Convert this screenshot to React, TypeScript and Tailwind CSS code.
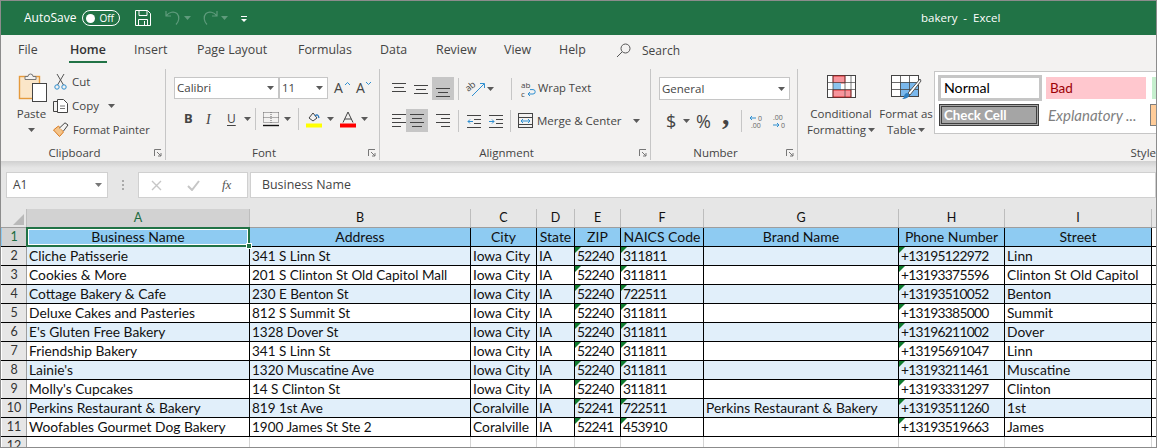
import React from "react";

const UI = "font-['Open_Sans',sans-serif]";
const cols = ["A", "B", "C", "D", "E", "F", "G", "H", "I"];
type R = [string, string, string, string, string, string, string, string, string];
const rows: R[] = [
  ["Cliche Patisserie", "341 S Linn St", "Iowa City", "IA", "52240", "311811", "", "+13195122972", "Linn"],
  ["Cookies & More", "201 S Clinton St Old Capitol Mall", "Iowa City", "IA", "52240", "311811", "", "+13193375596", "Clinton St Old Capitol"],
  ["Cottage Bakery & Cafe", "230 E Benton St", "Iowa City", "IA", "52240", "722511", "", "+13193510052", "Benton"],
  ["Deluxe Cakes and Pasteries", "812 S Summit St", "Iowa City", "IA", "52240", "311811", "", "+13193385000", "Summit"],
  ["E's Gluten Free Bakery", "1328 Dover St", "Iowa City", "IA", "52240", "311811", "", "+13196211002", "Dover"],
  ["Friendship Bakery", "341 S Linn St", "Iowa City", "IA", "52240", "311811", "", "+13195691047", "Linn"],
  ["Lainie's", "1320 Muscatine Ave", "Iowa City", "IA", "52240", "311811", "", "+13193211461", "Muscatine"],
  ["Molly's Cupcakes", "14 S Clinton St", "Iowa City", "IA", "52240", "311811", "", "+13193331297", "Clinton"],
  ["Perkins Restaurant & Bakery", "819 1st Ave", "Coralville", "IA", "52241", "722511", "Perkins Restaurant & Bakery", "+13193511260", "1st"],
  ["Woofables Gourmet Dog Bakery", "1900 James St Ste 2", "Coralville", "IA", "52241", "453910", "", "+13193519663", "James"],
];
const headers = ["Business Name", "Address", "City", "State", "ZIP", "NAICS Code", "Brand Name", "Phone Number", "Street"];
const gridCols = "grid grid-cols-[25px_223px_221px_66px_38px_46px_83px_195px_106px_147px_1fr]";

const Caret = ({ c = "#5a5a5a" }: { c?: string }) => (
  <svg width="7" height="4" viewBox="0 0 7 4" className="shrink-0"><path d="M0 0h7L3.5 4z" fill={c} /></svg>
);
const Sep = ({ h = "h-[22px]" }: { h?: string }) => <div className={`w-px ${h} bg-[#c6c6c6] shrink-0`} />;
const Launcher = () => (
  <svg width="8" height="8" viewBox="0 0 8 8" className="shrink-0"><path d="M.5 7V.5H7M3 3l4 4M7 4v3H4" fill="none" stroke="#777" strokeWidth="1" /></svg>
);

const Lines = ({ w, ys, xs }: { w: number; ys: number[]; xs: [number, number][] }) => (
  <svg width={w} height="16" viewBox={`0 0 ${w} 16`} className="block">
    {ys.map((y, i) => (
      <path key={i} d={`M${xs[i][0]} ${y + 0.5}H${xs[i][1]}`} stroke="#444" strokeWidth="1" />
    ))}
  </svg>
);
const Group = ({ w, label, launcher, labelClass = "justify-center pr-[17px]", children }: { w: string; label: string; launcher?: boolean; labelClass?: string; children: React.ReactNode }) => (
  <div className={`${w} h-full shrink-0 flex flex-col relative`}>
    <div className="flex-1 min-h-0">{children}</div>
    <div className={`h-[16px] flex items-start ${labelClass} text-[11.5px] leading-[16px] text-[#444]`}>{label}</div>
    {launcher && <div className="absolute right-[3px] bottom-[4px] flex"><Launcher /></div>}
  </div>
);

function ClipboardGroup() {
  return (
    <Group w="w-[164px]" label="Clipboard" launcher>
      <div className="flex pl-[9px] pt-[7px]">
        <div className="w-[43px] flex flex-col items-center">
          <svg width="32" height="32" viewBox="0 0 32 32">
            <rect x="3.5" y="5.5" width="20" height="22" fill="#fbe6c8" stroke="#e59a3c" strokeWidth="1.4" />
            <path d="M9 5.5h3a2.500 2.500 0 0 1 5 0h3v3H9z" fill="#f3f2f1" stroke="#777" strokeWidth="1" />
            <rect x="16.5" y="12.5" width="14" height="18" fill="#fff" stroke="#444" strokeWidth="1" />
          </svg>
          <div className="text-[11.5px] leading-[16px] text-[#444] mt-[3px]">Paste</div>
          <div className="mt-[6px]"><Caret /></div>
        </div>
        <div className="flex flex-col text-[11px] leading-[16px] text-[#444] -mt-[1px]">
          <div className="h-[24px] flex items-center gap-[5px]">
            <svg width="13" height="16" viewBox="0 0 13 16" className="ml-[1px]"><path d="M3 0l6.5 11M10 0L3.500 11" stroke="#555" fill="none" /><circle cx="3" cy="13" r="2.2" fill="none" stroke="#2f8fd0" /><circle cx="10" cy="13" r="2.2" fill="none" stroke="#2f8fd0" /></svg>
            <span className="text-[11.5px]">Cut</span>
          </div>
          <div className="h-[24px] flex items-center gap-[3px]">
            <svg width="16" height="16" viewBox="0 0 16 16"><path d="M6 3.5H.5v10H6" fill="none" stroke="#444" /><path d="M4.5 1.5h6l4 4v9h-10z" fill="#fff" stroke="#444" /><path d="M7 8h5M7 10.5h5" stroke="#777" /></svg>
            <span className="text-[11.5px]">Copy</span><span className="ml-[6px]"><Caret /></span>
          </div>
          <div className="h-[24px] flex items-center gap-[4px]">
            <svg width="16" height="16" viewBox="0 0 16 16"><path d="M0.5 8l5-4 5 6-4 4.500z" fill="#f4c48a" stroke="#d9791f" /><path d="M6.5 6L12 .8l3 2.200-4.500 6" fill="#f3f2f1" stroke="#444" /></svg>
            <span className="whitespace-nowrap">Format Painter</span>
          </div>
        </div>
      </div>
    </Group>
  );
}

function FontGroup() {
  return (
    <Group w="w-[213px]" label="Font" launcher>
      <div className="pl-[8px] pt-[13px] flex flex-col">
        <div className="flex items-center h-[22px]">
          <div className="w-[105px] h-[22px] bg-white border border-[#c6c6c6] flex items-center justify-between pl-[2px] pr-[4px] text-[11.5px] text-[#444]">Calibri <Caret /></div>
          <div className="w-[49px] h-[22px] bg-white border border-[#c6c6c6] flex items-center justify-between pl-[2px] pr-[4px] text-[11.5px] text-[#444]">11 <Caret /></div>
          <div className="ml-[6px] w-[22px] text-[14px] leading-[22px] text-[#444] relative">A<svg width="5" height="3" viewBox="0 0 5 3" className="absolute left-[11px] top-[5px]"><path d="M0 3l2.500-2.500L5 3" fill="none" stroke="#2f8fd0" /></svg></div>
          <div className="w-[22px] text-[14px] leading-[22px] text-[#444] relative">A<svg width="5" height="3" viewBox="0 0 5 3" className="absolute left-[10px] top-[5px]"><path d="M0 0l2.500 2.500L5 0" fill="none" stroke="#2f8fd0" /></svg></div>
        </div>
        <div className="flex items-center h-[22px] mt-[9px] text-[#444]">
          <span className="ml-[10px] w-[22px] text-[13px] font-bold font-['Noto_Sans',sans-serif]">B</span>
          <span className="w-[21px] text-[14px] italic font-['Liberation_Serif',serif]">I</span>
          <span className="w-[17px] text-[12px] underline underline-offset-2">U</span>
          <Caret />
          <span className="w-[4px]" />
          <Sep />
          <svg width="16" height="16" viewBox="0 0 16 16" className="ml-[7px]"><path d="M.5 1.500h15M.5 1.500v10M15.500 1.500v10M8 1v11M.5 6.500h15M.5 11.500h15" stroke="#666" strokeDasharray="1 1" fill="none" /><path d="M0 14.500h16" stroke="#111" strokeWidth="1.4" /></svg>
          <span className="ml-[5px]"><Caret /></span>
          <span className="ml-[7px]"><Sep /></span>
          <svg width="16" height="17" viewBox="0 0 16 17" className="ml-[7px]"><path d="M3 7l4-5 4 5-4 3z" fill="none" stroke="#444" /><path d="M9 5q3-3 4 2" fill="none" stroke="#1e6fb8" strokeWidth="1.3" /><rect x="0" y="12.500" width="16" height="4" fill="#ffff00" /></svg>
          <span className="ml-[5px]"><Caret /></span>
          <svg width="16" height="17" viewBox="0 0 16 17" className="ml-[6px]"><path d="M3 11.500L8 1l5 10.500M4.800 8h6.400" fill="none" stroke="#444" /><rect x="0" y="12.500" width="16" height="4" fill="#ff0000" /></svg>
          <span className="ml-[5px]"><Caret /></span>
        </div>
      </div>
    </Group>
  );
}

function AlignIcon({ ys, xs }: { ys: number[]; xs: [number, number][] }) {
  return <Lines w={14} ys={ys} xs={xs} />;
}

function AlignmentGroup() {
  const sel = "bg-[#c6c6c6]";
  const cell = "w-[22px] h-[23px] flex items-center justify-center";
  return (
    <Group w="w-[270px]" label="Alignment" launcher>
      <div className="pl-[8px] pt-[13px] flex flex-col text-[#444] text-[11.5px]">
        <div className="flex items-center h-[23px]">
          <div className={cell}><AlignIcon ys={[2, 6, 10]} xs={[[0, 14], [2, 12], [0, 14]]} /></div>
          <div className={cell}><AlignIcon ys={[4, 8, 12]} xs={[[0, 14], [2, 12], [0, 14]]} /></div>
          <div className={`${cell} ${sel}`}><AlignIcon ys={[7, 11, 15]} xs={[[0, 14], [2, 12], [0, 14]]} /></div>
          <span className="ml-[4px]"><Sep /></span>
          <div className="ml-[7px] w-[24px] h-[20px] flex items-center">
            <svg width="20" height="16" viewBox="0 0 20 16" className="overflow-visible"><path d="M6 15L18 3M14 2.500h4.500V7" fill="none" stroke="#2f8fd0" /><text x="0" y="9" fontSize="9" fill="#444" transform="rotate(-40 4 7)" fontFamily="Open Sans">ab</text></svg>
          </div>
          <span className="ml-[-3px]"><Caret /></span>
          <span className="ml-[17px]"><Sep /></span>
          <div className="ml-[9px] w-[15px] h-[18px] relative text-[8px] leading-[9px] text-[#444] flex flex-col">
            <span>ab</span>
            <span>c</span>
            <svg width="10" height="9" viewBox="0 0 10 9" className="absolute left-[6px] top-[9px]"><path d="M1 5h5a2.200 2.200 0 0 0 0-4.400H3M3 3L1 5l2 2" fill="none" stroke="#2f8fd0" /></svg>
          </div>
          <span className="ml-[2px] text-[11.2px]">Wrap Text</span>
        </div>
        <div className="flex items-center h-[23px] mt-[9px]">
          <div className={cell}><AlignIcon ys={[1, 5, 9, 13]} xs={[[0, 14], [0, 9], [0, 14], [0, 9]]} /></div>
          <div className={`${cell} ${sel} ml-[-4px] mr-[4px]`}><AlignIcon ys={[1, 5, 9, 13]} xs={[[0, 14], [2, 12], [0, 14], [2, 12]]} /></div>
          <div className={cell}><AlignIcon ys={[1, 5, 9, 13]} xs={[[0, 14], [5, 14], [0, 14], [5, 14]]} /></div>
          <span className="ml-[4px]"><Sep /></span>
          <svg width="14" height="14" viewBox="0 0 14 14" className="ml-[8px]"><path d="M0 1.500h14M7 5.500h7M7 9.500h7M0 13.500h14" stroke="#444" /><path d="M6 7.500H1M3 5.500l-2 2 2 2" fill="none" stroke="#2f8fd0" /></svg>
          <svg width="14" height="14" viewBox="0 0 14 14" className="ml-[8px]"><path d="M0 1.500h14M7 5.500h7M7 9.500h7M0 13.500h14" stroke="#444" /><path d="M0 7.500h5M3 5.500l2 2-2 2" fill="none" stroke="#2f8fd0" /></svg>
          <span className="ml-[7px]"><Sep /></span>
          <svg width="15" height="15" viewBox="0 0 15 15" className="ml-[7px]"><rect x=".5" y=".5" width="14" height="14" fill="none" stroke="#444" /><path d="M0 4.500h15M0 11.500h15" stroke="#444" /><path d="M3 8h9M5 6L3 8l2 2M10 6l2 2-2 2" fill="none" stroke="#2f8fd0" /></svg>
          <span className="ml-[4px] whitespace-nowrap">Merge &amp; Center</span>
          <span className="ml-[11px]"><Caret /></span>
        </div>
      </div>
    </Group>
  );
}

function NumberGroup() {
  return (
    <Group w="w-[146px]" label="Number" launcher>
      <div className="pl-[8px] pt-[13px] flex flex-col text-[#444]">
        <div className="w-[131px] h-[23px] bg-white border border-[#c6c6c6] flex items-center justify-between pl-[2px] pr-[4px] text-[11.5px]">General <Caret /></div>
        <div className="flex items-center h-[23px] mt-[9px]">
          <span className="ml-[7px] w-[17px] text-[18px] leading-none">$</span>
          <Caret />
          <span className="ml-[6px] w-[26px] text-[18px] leading-none">%</span>
          <span className="w-[19px] text-[30px] leading-none font-bold font-['Liberation_Serif',serif] -mt-[14px]">,</span>
          <Sep />
          <svg width="16" height="16" viewBox="0 0 16 16" className="ml-[7px]"><path d="M7 5H1M3 3L1 5l2 2" fill="none" stroke="#2f8fd0" /><text x="9" y="8" fontSize="7" fill="#666" fontFamily="Open Sans">0<tspan x="2" y="15">.00</tspan></text></svg>
          <svg width="16" height="16" viewBox="0 0 16 16" className="ml-[7px]"><text x="1" y="7" fontSize="7" fill="#666" fontFamily="Open Sans">.00<tspan x="9" y="15">0</tspan></text><path d="M1 12h6M5 10l2 2-2 2" fill="none" stroke="#2f8fd0" /></svg>
        </div>
      </div>
    </Group>
  );
}

function StylesGroup() {
  return (
    <Group w="flex-1 min-w-0" label="Style" labelClass="justify-end">
      <div className="flex h-full overflow-hidden text-[11.5px] leading-[16px] text-[#444]">
        <div className="w-[86px] shrink-0 flex flex-col items-center pt-[11px]">
          <svg width="29" height="23" viewBox="0 0 29 23">
            <rect x=".5" y=".5" width="28" height="22" fill="#fff" stroke="#444" />
            <rect x="6" y="1" width="12" height="7" fill="#f7959c" stroke="#c00" strokeWidth=".7" />
            <rect x="6" y="8" width="8" height="7" fill="#8cc4ee" />
            <rect x="6" y="15" width="18" height="7" fill="#f7959c" stroke="#c00" strokeWidth=".7" />
            <path d="M0 7.500h29M0 14.500h29M6 0v23M18 0v23M24 0v23" stroke="#444" strokeWidth=".7" fill="none" />
          </svg>
          <div className="mt-[8px] text-center whitespace-nowrap">Conditional</div>
          <div className="flex items-center gap-[2px] whitespace-nowrap">Formatting <Caret /></div>
        </div>
        <div className="w-[44px] shrink-0 flex flex-col items-center pt-[11px]">
          <svg width="31" height="26" viewBox="0 0 31 26" className="-mb-[3px] shrink-0">
            <rect x=".5" y=".5" width="27" height="21" fill="#fff" stroke="#444" />
            <rect x="9" y="7" width="18" height="14" fill="#7ab8ec" />
            <path d="M0 7.500h28M0 14.500h28M9.500 0v22M18.500 0v22" stroke="#444" strokeWidth=".8" fill="none" />
            <path d="M29 4L17 18l2 2L30 6z" fill="#fff" stroke="#555" />
            <path d="M13 21c1-3 3-4 5-2 1 3-3 5-7 5 1-1 2-1 2-3z" fill="#2f7fc0" />
          </svg>
          <div className="mt-[8px] text-center whitespace-nowrap">Format as</div>
          <div className="flex items-center gap-[2px] whitespace-nowrap">Table <Caret /></div>
        </div>
        <div className="ml-[6px] mt-[7px] h-[63px] flex-1 min-w-0 bg-white border border-[#c6c6c6] border-r-0 pl-[3px] pt-[3px] overflow-hidden">
          <div className="flex gap-[4px] items-center h-[26px]">
            <div className="w-[104px] shrink-0 h-[26px] border-[3px] border-[#c6c6c6] flex items-center pl-[3px] text-[14.2px] font-['Lato',sans-serif] text-black">Normal</div>
            <div className="w-[100px] shrink-0 h-[22px] bg-[#ffc7ce] flex items-center pl-[4px] text-[13.5px] font-['Lato',sans-serif] text-[#9c0006]">Bad</div>
            <div className="w-[20px] shrink-0 h-[22px] bg-[#c6efce] ml-[2px]" />
          </div>
          <div className="flex gap-[4px] items-center h-[22px] mt-[3px]">
            <div className="w-[100px] ml-[1px] shrink-0 h-[22px] bg-[#a5a5a5] border-[3px] border-double border-[#3f3f3f] flex items-center pl-[2px] text-[13.3px] font-bold font-['Lato',sans-serif] text-white">Check Cell</div>
            <div className="w-[100px] ml-[1px] shrink-0 h-[22px] flex items-center pl-[4px] text-[15px] italic font-['Lato',sans-serif] text-[#7f7f7f] whitespace-nowrap">Explanatory ...</div>
            <div className="w-[20px] shrink-0 h-[22px] bg-[#ffcc99] border border-[#7f7f7f] ml-[2px]" />
          </div>
        </div>
      </div>
    </Group>
  );
}

function Vr() {
  return <div className="w-px h-[91px] mt-[5px] bg-[#c6c6c6] shrink-0" />;
}

const tabs: [string, string][] = [
  ["File", "w-[51px]"], ["Home", "w-[65px]"], ["Insert", "w-[63px]"], ["Page Layout", "w-[101px]"],
  ["Formulas", "w-[82px]"], ["Data", "w-[56px]"], ["Review", "w-[68px]"], ["View", "w-[55px]"], ["Help", "w-[57px]"],
];

function Tri() {
  return <span className="absolute left-0 top-0 w-0 h-0 border-t-[6px] border-r-[6px] border-t-[#0f7a2e] border-r-transparent" />;
}

export default function App() {
  return (
    <div className={`w-[1157px] h-[448px] overflow-hidden bg-[#e6e6e6] border border-[#8c8c8c] flex flex-col ${UI}`}>
      {/* title bar */}
      <div className="h-[34px] shrink-0 bg-[#217346] flex items-center text-white text-[12px] relative">
        <span className="ml-[23px]">AutoSave</span>
        <div className="ml-[6px] w-[38px] h-[16px] rounded-full border border-white flex items-center pl-[3px] gap-[4px]">
          <span className="w-[9px] h-[9px] rounded-full bg-white" />
          <span className="text-[10px] leading-none">Off</span>
        </div>
        <svg width="16" height="16" viewBox="0 0 16 16" className="ml-[15px]"><path d="M.5.5h12l3 3v12H.5zM4 .5v5h8v-5M3.5 15.500v-6h9v6M9.500 11v4" fill="none" stroke="#fff" /></svg>
        <svg width="16" height="16" viewBox="0 0 16 16" className="ml-[14px]"><path d="M1 1v5h5M1.500 5.500C4 2 9 1 12 3.500c3 3 2 8-1 11" fill="none" stroke="#5f9b7c" strokeWidth="1.2" /></svg>
        <span className="ml-[3px]"><Caret c="#5f9b7c" /></span>
        <svg width="16" height="16" viewBox="0 0 16 16" className="ml-[11px]"><path d="M15 1v5h-5M14.500 5.500C12 2 7 1 4 3.500c-3 3-2 8 1 11" fill="none" stroke="#5f9b7c" strokeWidth="1.2" /></svg>
        <span className="ml-[3px]"><Caret c="#5f9b7c" /></span>
        <svg width="6" height="6" viewBox="0 0 6 6" className="ml-[13px] mt-[2px]"><path d="M0 .5h6" stroke="#fff" /><path d="M0 3h6L3 6z" fill="#fff" /></svg>
        <span className="absolute left-[920px] whitespace-pre text-[11.5px]">bakery  -  Excel</span>
      </div>
      {/* tabs */}
      <div className="h-[29px] shrink-0 bg-[#f3f2f1] flex items-center pl-[17px] pt-[2px] text-[12.4px] text-[#444]">
        {tabs.map(([t, w]) => (
          <div key={t} className={`${w} h-full flex items-center`}>
            {t === "Home" ? (
              <span className="relative px-[1px] font-semibold text-[#333]">Home<span className="absolute left-0 right-0 -bottom-[3px] h-[2px] bg-[#217346]" /></span>
            ) : t}
          </div>
        ))}
        <svg width="15" height="15" viewBox="0 0 15 15"><circle cx="9.500" cy="5.500" r="4.500" fill="none" stroke="#555" /><path d="M6 9l-5 5" stroke="#555" /></svg>
        <span className="ml-[11px] text-[12px]">Search</span>
      </div>
      {/* ribbon */}
      <div className="h-[97px] shrink-0 bg-[#f3f2f1] flex">
        <ClipboardGroup /><Vr /><FontGroup /><Vr /><AlignmentGroup /><Vr /><NumberGroup /><Vr /><StylesGroup />
      </div>
      <div className="h-[7px] shrink-0 bg-gradient-to-b from-[#d0d0d0] to-[#e6e6e6]" />
      <div className="h-[4px] shrink-0" />
      {/* formula bar */}
      <div className="h-[26px] shrink-0 flex items-stretch text-[12px] text-[#444]">
        <div className="ml-[5px] w-[102px] bg-white border border-[#d0d0d0] flex items-center justify-between pl-[6px] pr-[5px]">A1 <Caret c="#777" /></div>
        <div className="w-[30px] flex flex-col items-center justify-center gap-[2px]">
          <span className="w-[2px] h-[2px] bg-[#aaa]" /><span className="w-[2px] h-[2px] bg-[#aaa]" /><span className="w-[2px] h-[2px] bg-[#aaa]" />
        </div>
        <div className="w-[110px] bg-white border border-[#d0d0d0] flex items-center">
          <svg width="11" height="11" viewBox="0 0 11 11" className="ml-[12px]"><path d="M1 1l9 9M10 1l-9 9" stroke="#c6c6c6" strokeWidth="1.4" /></svg>
          <svg width="13" height="11" viewBox="0 0 13 11" className="ml-[25px]"><path d="M1 6l4 4 7-9" fill="none" stroke="#c6c6c6" strokeWidth="2" /></svg>
          <span className="ml-[22px] text-[13px] italic font-['Liberation_Serif',serif] text-[#555]">fx</span>
        </div>
        <div className="ml-[2px] flex-1 bg-white border border-[#d0d0d0] flex items-center pl-[11px] text-[12.4px]">Business Name</div>
      </div>
      <div className="h-[11px] shrink-0" />
      {/* sheet */}
      <div className="flex-1 min-h-0 bg-white overflow-hidden font-['Lato',sans-serif] text-[13.8px] leading-[18px] text-[#111]">
        <div className={`${gridCols} pl-[1px] h-[19px] bg-[#e6e6e6] border-b border-[#9e9e9e]`}>
          <div className="border-r border-[#bdbdbd] flex items-end justify-end pr-[2px] pb-[2px]">
            <svg width="11" height="11" viewBox="0 0 11 11"><path d="M11 0v11H0z" fill="#b9b9b9" /></svg>
          </div>
          {cols.map((c, i) => (
            <div key={c} className={`text-center border-r border-[#bdbdbd] text-[12.5px] ${i === 0 ? "bg-[#d2d2d2] text-[#1c6b40]" : ""}`}>{c}</div>
          ))}
          <div />
        </div>
        <div className={`${gridCols} pl-[1px] h-[19px] bg-[#8ecbf2] border-b border-black`}>
          <div className="bg-[#d2d2d2] border-r border-[#9e9e9e] text-center text-[#1c6b40] text-[12.5px]">1</div>
          {headers.map((h, i) =>
            i === 0 ? (
              <div key={h} className="text-center text-[14px] whitespace-nowrap relative border-2 border-[#217346] shadow-[inset_0_0_0_1px_#ffffff] -my-[1px] -ml-[1px] z-10 leading-[16px]">
                {h}
                <span className="absolute -right-[4px] -bottom-[4px] w-[6px] h-[6px] bg-[#217346] border border-white" />
              </div>
            ) : (
              <div key={h} className="text-center text-[14px] border-r border-black whitespace-nowrap overflow-hidden">{h}</div>
            )
          )}
          <div className="bg-white" />
        </div>
        {rows.map((r, ri) => (
          <div key={ri} className={`${gridCols} pl-[1px] h-[19px] border-b border-black`}>
            <div className="bg-[#e6e6e6] border-r border-[#9e9e9e] text-center text-[#333] text-[12.5px]">{ri + 2}</div>
            {r.map((v, i) => {
              const numeric = i === 4 || i === 5 || i === 7;
              return (
                <div key={i} className={`border-r border-black pl-[2px] whitespace-nowrap overflow-hidden relative ${ri % 2 === 0 ? "bg-[#e1effa]" : "bg-white"} ${numeric ? "tracking-[-0.7px]" : ""} ${i === 1 ? "text-[13.5px]" : ""}`}>
                  {numeric && <Tri />}
                  {v}
                </div>
              );
            })}
            <div className="bg-white" />
          </div>
        ))}
        <div className={`${gridCols} pl-[1px] h-[12px]`}>
          <div className="bg-[#e6e6e6] border-r border-[#9e9e9e] text-center text-[#333] text-[12.5px]">12</div>
          {cols.map((c) => <div key={c} className="border-r border-[#d4d4d4]" />)}
          <div />
        </div>
      </div>
    </div>
  );
}
